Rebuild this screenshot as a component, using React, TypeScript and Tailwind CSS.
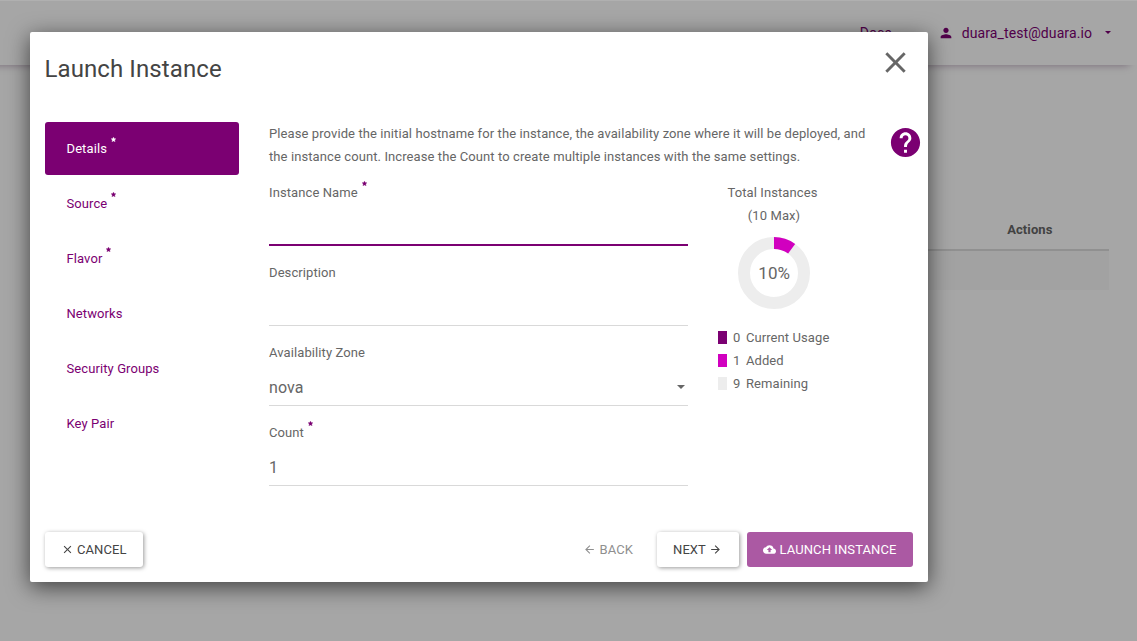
import React from 'react';
import { MdArrowBack, MdArrowForward, MdBackup, MdClose, MdHelp, MdPerson } from 'react-icons/md';

const steps = [
  { label: 'Details', required: true, active: true },
  { label: 'Source', required: true },
  { label: 'Flavor', required: true },
  { label: 'Networks' },
  { label: 'Security Groups' },
  { label: 'Key Pair' },
];

const legend = [
  { color: 'bg-[#7b0072]', value: 0, label: 'Current Usage' },
  { color: 'bg-[#d100bf]', value: 1, label: 'Added' },
  { color: 'bg-[#ededed]', value: 9, label: 'Remaining' },
];

function Star({ light = false }: { light?: boolean }) {
  return (
    <svg
      className={`relative -top-[11px] ml-[4px] inline-block align-baseline ${light ? 'text-white' : 'text-[#7b0072]'}`}
      width="5"
      height="5"
      viewBox="0 0 10 10"
      fill="currentColor"
    >
      <path d="M5 0L6.3 3.2L10 3.5L7.3 6L8.3 9.6L5 7.8L1.7 9.6L2.7 6L0 3.5L3.7 3.2Z" stroke="currentColor" strokeWidth="0.5" />
    </svg>
  );
}

function Caret({ className }: { className: string }) {
  return (
    <svg className={className} viewBox="0 0 8 4" fill="currentColor">
      <path d="M0 0H8L4 4Z" />
    </svg>
  );
}

function Field({ label, required = false, focused = false, children }: {
  label: string;
  required?: boolean;
  focused?: boolean;
  children?: React.ReactNode;
}) {
  return (
    <div className="h-20">
      <div className="h-[23px] whitespace-nowrap">
        {label}
        {required && <Star />}
      </div>
      <div className={`mt-[5px] flex h-[37px] items-center justify-between pt-[2px] text-base ${focused ? 'border-b-2 border-[#7b0072]' : 'border-b border-[#d9d9d9]'}`}>
        {children}
      </div>
    </div>
  );
}

export default function App() {
  return (
    <div className="relative h-[641px] w-[1137px] overflow-hidden bg-white font-['Roboto',sans-serif] text-[13px] leading-[23px] tracking-[0.095px] text-[#666]">
      <header className="-ml-5 flex h-[65px] items-start justify-end pt-[22px] pr-[26px] text-sm leading-[23px] text-[#7b0072] shadow-[0_8px_8px_-8px_rgba(70,20,70,0.4)]">
        <span className="mr-[46px]">Docs</span>
        <MdPerson className="mt-[3px] mr-[8px] size-[16px]" />
        <span>duara_test@duara.io</span>
        <Caret className="mt-[9px] ml-[13px] h-[3px] w-[6px]" />
      </header>
      <div className="mt-[148px] mr-7 ml-10">
        <div className="flex h-[38px] justify-end border-b-2 border-[#ddd] pt-[5px] pr-[56.5px] font-bold">Actions</div>
        <div className="h-[39px] bg-[#f9f9f9]" />
      </div>

      <div className="absolute inset-0 bg-black/35" />
      <div className="absolute inset-x-0 top-0 h-px bg-[#b0b0b0]" />

      <section className="absolute top-8 left-[30px] flex h-[550px] w-[898px] flex-col rounded-[2px] bg-white shadow-[0_5px_22px_rgba(0,0,0,0.62)]">
        <div className="flex h-[90px] items-start justify-between pt-[15px] pr-[15px] pl-[14.5px]">
          <h1 className="mt-1 text-2xl leading-9 tracking-[0.095px] text-[#444]">Launch Instance</h1>
          <MdClose className="-mt-[2px] size-[35px] text-[#666]" />
        </div>

        <div className="flex h-[410px] pl-[15px]">
          <nav className="flex w-[194px] flex-col gap-[2px]">
            {steps.map((s) => (
              <div
                key={s.label}
                className={`flex h-[53px] items-center rounded-[3px] pl-[21.5px] ${s.active ? 'bg-[#7b0072] text-white' : 'text-[#7b0072]'}`}
              >
                <span>
                  {s.label}
                  {s.required && <Star light={s.active} />}
                </span>
              </div>
            ))}
          </nav>

          <div className="ml-[30px] w-[614px]">
            <p className="h-[46px] whitespace-nowrap">
              Please provide the initial hostname for the instance, the availability zone where it will be deployed, and
              <br />
              the instance count. Increase the Count to create multiple instances with the same settings.
            </p>
            <div className="mt-[13px] flex">
              <div className="w-[419px]">
                <Field label="Instance Name" required focused />
                <Field label="Description" />
                <Field label="Availability Zone">
                  <span>nova</span>
                  <Caret className="mr-[3px] mb-[2px] h-[4px] w-[8px]" />
                </Field>
                <Field label="Count" required>
                  <span>1</span>
                </Field>
              </div>
              <div className="ml-[30px] w-[112px]">
                <div className="text-center">
                  <span className="mr-[3px]">Total Instances</span>
                  <br />
                  (10 Max)
                </div>
                <svg className="mx-auto mt-[10px] block" width="72" height="72" viewBox="0 0 72 72">
                  <circle cx="36" cy="36" r="30" fill="none" stroke="#ededed" strokeWidth="12" />
                  <path d="M36 0A36 36 0 0 1 57.16 6.88L50.11 16.58A24 24 0 0 0 36 12Z" fill="#d100bf" />
                  <text x="36.2" y="42" textAnchor="middle" fontSize="17" fill="#666">10%</text>
                </svg>
                <ul className="mt-[17px]">
                  {legend.map((l) => (
                    <li key={l.label} className="flex h-[23px] items-center whitespace-nowrap">
                      <span className={`mr-[6px] h-[13px] w-[9px] ${l.color}`} />
                      <span className="mr-[5.5px]">{l.value}</span>
                      <span>{l.label}</span>
                    </li>
                  ))}
                </ul>
              </div>
            </div>
          </div>
          <MdHelp className="mt-[3px] ml-[5px] size-[35px] shrink-0 text-[#7b0072]" />
        </div>

        <footer className="flex h-[35px] items-center px-[15px] text-[#444]">
          <button className="flex h-[35px] w-[98px] items-center justify-center gap-[3px] rounded-[3px] pr-[0.5px] shadow-[1px_1px_4px_rgba(0,0,0,0.4)]">
            <MdClose className="size-[13px]" />
            CANCEL
          </button>
          <button className="ml-auto flex h-[35px] w-[82px] items-center justify-center gap-[3.5px] pr-[2px] text-[#8f8f8f]">
            <MdArrowBack className="size-[13px]" />
            BACK
          </button>
          <button className="ml-[7px] flex h-[35px] w-[82px] items-center justify-center gap-[3.5px] rounded-[3px] pr-[0.5px] shadow-[1px_1px_4px_rgba(0,0,0,0.4)]">
            NEXT
            <MdArrowForward className="size-[13px]" />
          </button>
          <button className="ml-2 flex h-[35px] w-[166px] items-center justify-center gap-[3.5px] rounded-[3px] bg-[#ab59a3] pr-[0.5px] text-white">
            <MdBackup className="size-[13px]" />
            LAUNCH INSTANCE
          </button>
        </footer>
      </section>
    </div>
  );
}
